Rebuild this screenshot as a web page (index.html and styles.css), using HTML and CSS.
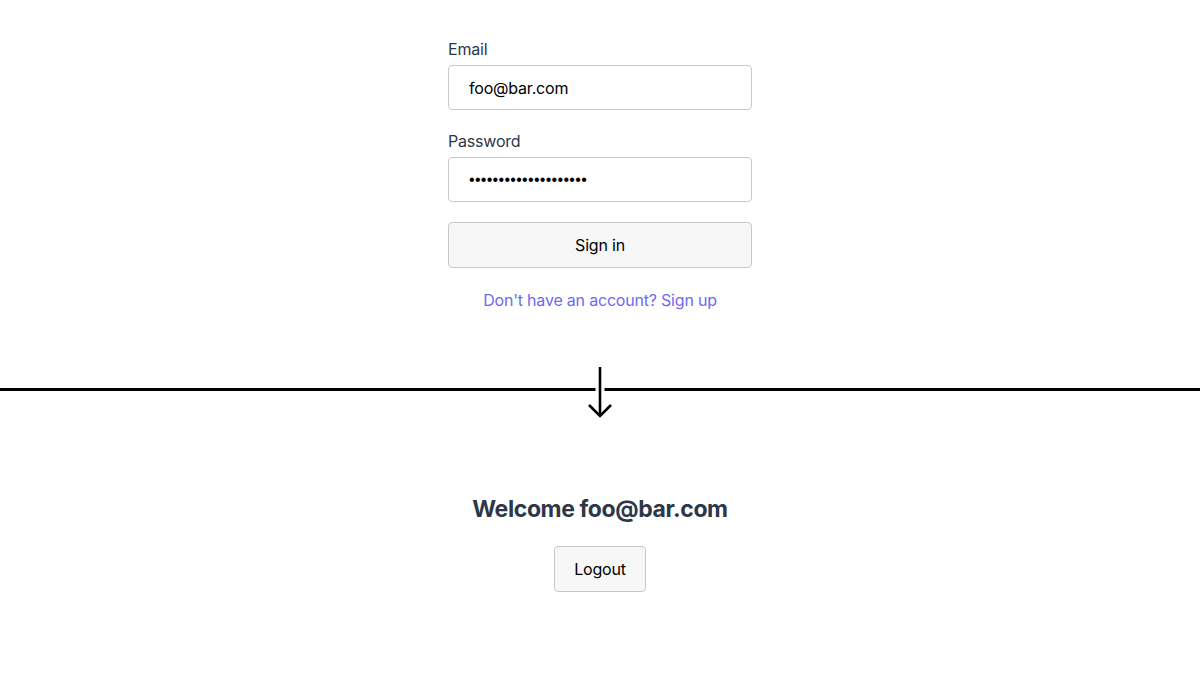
FILE: index.html
```html
<!DOCTYPE html>
<html lang="en">
<head>
    <meta charset="UTF-8">
    <meta name="viewport" content="width=device-width, initial-scale=1.0">
    <title>Sign in</title>
    <link rel="stylesheet" href="styles.css">
</head>
<body>
    <form class="login">
        <label class="field-label" for="email">Email</label>
        <input class="field" id="email" type="email" value="foo@bar.com">
        <label class="field-label second" for="password">Password</label>
        <input class="field field-pass" id="password" type="password" value="aaaaaaaaaaaaaaaaaaaa">
        <button class="btn btn-wide" type="button">Sign in</button>
        <a class="signup" href="#">Don't have an account? Sign up</a>
    </form>

    <div class="divider">
        <svg class="arrow" width="40" height="56" viewBox="0 0 40 56">
            <line x1="20" y1="2" x2="20" y2="51" stroke="#fff" stroke-width="9"/>
            <line x1="20" y1="2" x2="20" y2="51" stroke="#000" stroke-width="2.6"/>
            <polyline points="9,40 20,51 31,40" fill="none" stroke="#000" stroke-width="2.6"/>
        </svg>
    </div>

    <div class="welcome">
        <h2>Welcome foo@bar.com</h2>
        <button class="btn" type="button">Logout</button>
    </div>
</body>
</html>
```

FILE: styles.css
```css
body {
    margin: 0;
    font-family: Inter, "Noto Sans", sans-serif;
    letter-spacing: -0.2px;
    background: #fff;
}
.login {
    width: 304px;
    margin: 0 auto;
    padding-top: 40px;
    display: flex;
    flex-direction: column;
}
.field-label {
    font-size: 16px;
    line-height: 19px;
    color: #2d3748;
    margin-bottom: 6px;
}
.field-label.second {
    margin-top: 22px;
}
.field {
    box-sizing: border-box;
    height: 45px;
    padding: 0 20px;
    border: 1px solid #c8c8c8;
    border-radius: 4px;
    font-family: inherit;
    font-size: 16px;
    letter-spacing: inherit;
    color: #000;
    outline: none;
}
.field-pass {
    font-family: "Liberation Sans", Arial, sans-serif;
    letter-spacing: 0.3px;
}
.btn {
    box-sizing: border-box;
    height: 46px;
    padding: 0 19px;
    border: 1px solid #c8c8c8;
    border-radius: 4px;
    background: #f7f7f7;
    font-family: inherit;
    font-size: 16px;
    letter-spacing: inherit;
    color: #000;
}
.btn-wide {
    margin-top: 20px;
    width: 100%;
}
.signup {
    margin-top: 23px;
    text-align: center;
    font-size: 16px;
    line-height: 19px;
    color: #6b6bf0;
    text-decoration: none;
}
.divider {
    position: relative;
    margin-top: 78px;
    border-top: 3px solid #000;
}
.arrow {
    position: absolute;
    left: 50%;
    top: -26px;
    margin-left: -20px;
}
.welcome {
    margin-top: 104px;
    display: flex;
    flex-direction: column;
    align-items: center;
}
.welcome h2 {
    margin: 0 0 22px;
    font-size: 23px;
    line-height: 29px;
    font-weight: 700;
    letter-spacing: -0.4px;
    color: #2d3748;
}
```
